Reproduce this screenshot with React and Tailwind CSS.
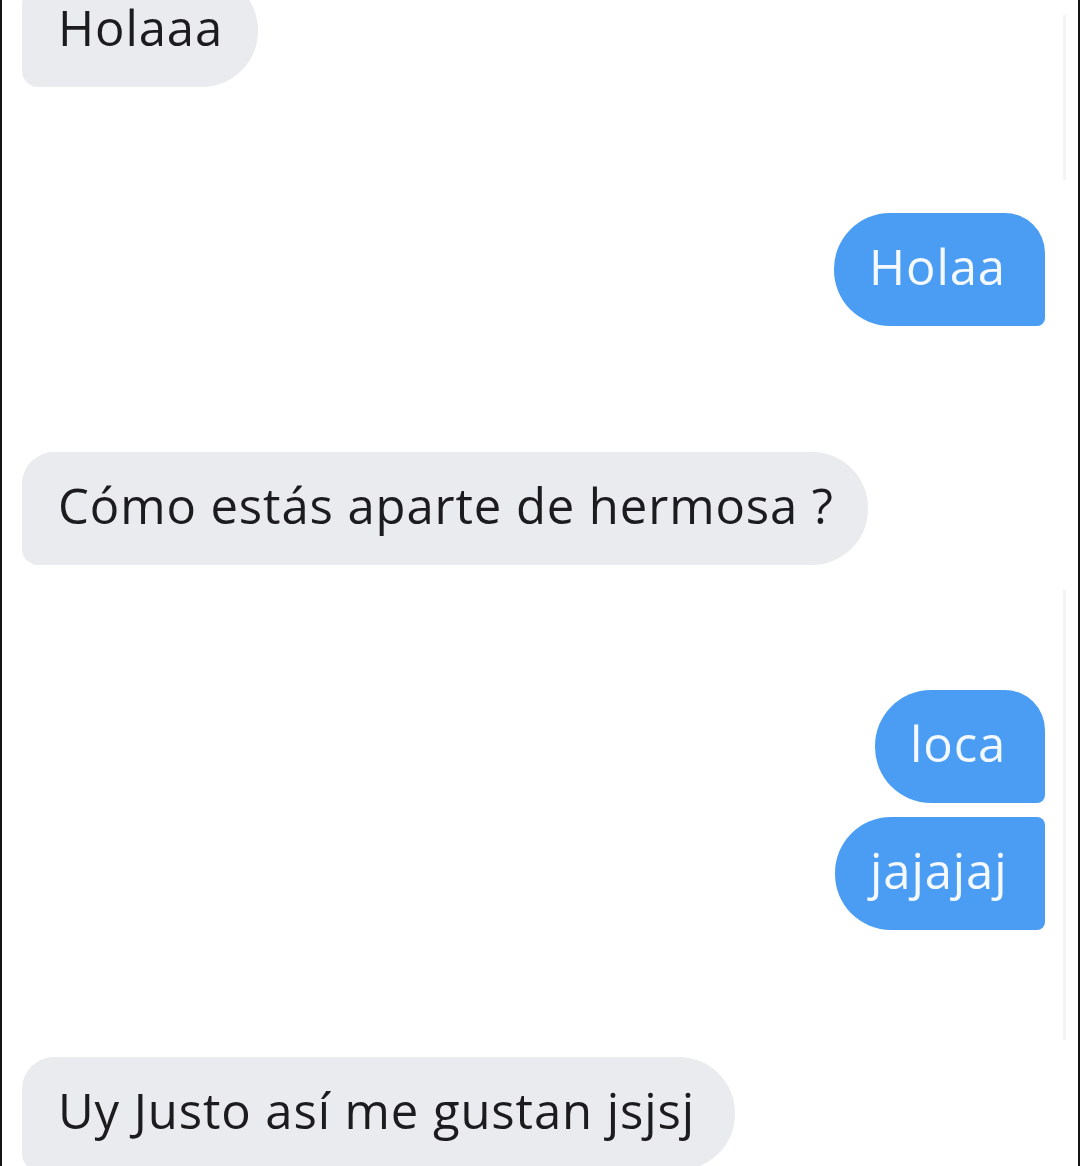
import React from "react";

function Left({ text, className = "" }) {
  return (
    <div
      className={`self-start ml-[20px] h-[113px] shrink-0 bg-[#eaebef] rounded-tl-[32px] rounded-bl-[16px] rounded-r-[56px] pl-[36px] pt-[24px] text-[49px] leading-[58px] tracking-[0.9px] text-[#1c1c1e] whitespace-nowrap ${className}`}
    >
      {text}
    </div>
  );
}

function Right({ text, className = "" }) {
  return (
    <div
      className={`self-end mr-[33px] h-[113px] shrink-0 bg-[#4a9df2] rounded-l-[56px] rounded-br-[8px] pl-[35px] pt-[24px] text-[49px] leading-[58px] tracking-[0.9px] text-[#f4f8ff] whitespace-nowrap ${className}`}
    >
      {text}
    </div>
  );
}

export default function App() {
  return (
    <div className="relative w-[1080px] h-[1166px] overflow-hidden bg-white border-x-2 border-[#141414] flex flex-col font-['Open_Sans',sans-serif]">
      <div className="absolute right-[12px] top-[15px] w-[3px] h-[165px] bg-[#f4f4f4]" />
      <div className="absolute right-[12px] top-[590px] w-[3px] h-[450px] bg-[#f4f4f4]" />
      <Left text="Holaaa" className="w-[236px] -mt-[26px]" />
      <Right text="Holaa" className="w-[211px] rounded-tr-[40px] mt-[126px]" />
      <Left text="Cómo estás aparte de hermosa ?" className="w-[846px] mt-[126px]" />
      <Right text="loca" className="w-[170px] rounded-tr-[40px] mt-[125px]" />
      <Right text="jajajaj" className="w-[210px] rounded-tr-[8px] mt-[14px]" />
      <Left text="Uy Justo así me gustan jsjsj" className="w-[713px] mt-[127px]" />
    </div>
  );
}
